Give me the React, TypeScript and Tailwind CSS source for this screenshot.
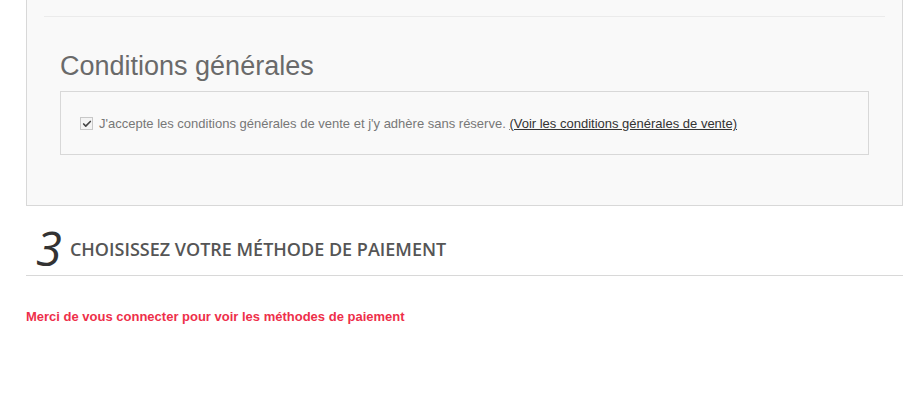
import { Check } from "lucide-react";

export default function App() {
  return (
    <div className="min-h-[394px] w-[910px] bg-white font-['Liberation_Sans',Arial,sans-serif]">
      <div className="w-[877px] ml-[26px]">
        {/* conditions panel */}
        <div className="bg-[#f9f9f9] border-x border-b border-[#d8d8d8] px-[17px] pt-[16px] pb-[50px]">
          <div className="border-t border-[#ebebeb]" />
          <div className="px-4 pt-[34px]">
            <h2 className="text-[27px] leading-[31px] text-[#6a6a6a]">
              Conditions générales
            </h2>
            <div className="mt-[9px] h-[64px] border border-[#d8d8d8] flex items-center px-[19px] pt-[1px]">
              <label className="flex items-center gap-[6px] text-[13px] text-[#777]">
                <span className="w-[13px] h-[13px] border border-[#c8c8c8] bg-[#f4f4f4] flex items-center justify-center">
                  <Check className="w-[10px] h-[10px] text-[#444]" strokeWidth={4} />
                </span>
                <span>
                  J'accepte les conditions générales de vente et j'y adhère sans réserve.{" "}
                  <a href="#" className="text-[#333] underline">
                    (Voir les conditions générales de vente)
                  </a>
                </span>
              </label>
            </div>
          </div>
        </div>

        {/* step 3 */}
        <div className="flex items-end h-[70px] border-b border-[#d8d8d8] pl-[10px] pb-[5px]">
          <span className="font-['Open_Sans',sans-serif] italic font-medium text-[47px] leading-[46px] text-[#333] mr-[8px] translate-y-[1px]">
            3
          </span>
          <h3 className="font-['Open_Sans',sans-serif] font-semibold text-[18px] leading-[20px] text-[#555] pb-[11px] uppercase">
            Choisissez votre méthode de paiement
          </h3>
        </div>

        <p className="mt-[31px] text-[13px] font-bold text-[#ee2f4a]">
          Merci de vous connecter pour voir les méthodes de paiement
        </p>
      </div>
    </div>
  );
}
